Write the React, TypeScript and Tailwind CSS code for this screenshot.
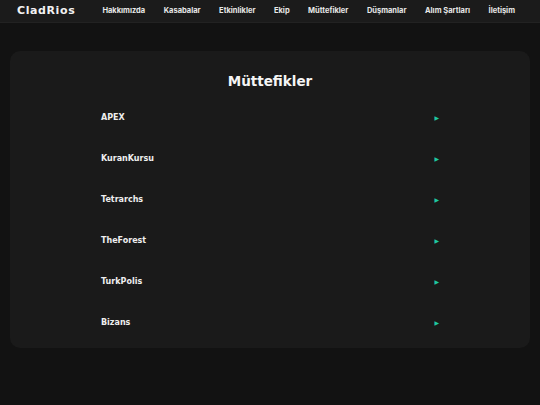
import React from "react"

const navLinks = ["Hakkımızda", "Kasabalar", "Etkinlikler", "Ekip", "Müttefikler", "Düşmanlar", "Alım Şartları", "İletişim"]

const allies = ["APEX", "KuranKursu", "Tetrarchs", "TheForest", "TurkPolis", "Bizans"]

export default function App() {
  return (
    <div
      className="min-h-[405px] bg-[#121212] text-white"
      style={{ fontFamily: "'DejaVu Sans', 'Open Sans', sans-serif" }}
    >
      {/* Header */}
      <header className="flex h-[23px] items-center justify-between border-b border-[#222] bg-[#1b1b1b] pl-[17px] pr-[25px]">
        <div className="text-[11px] font-bold tracking-[0.6px] text-[#f2f2f2]">CladRios</div>
        <nav className="flex items-center gap-[18.5px] whitespace-nowrap" style={{ fontFamily: "Inter, sans-serif" }}>
          {navLinks.map((link) => (
            <a key={link} className="text-[7.5px] font-bold text-[#e8e8e8]">
              {link}
            </a>
          ))}
        </nav>
      </header>

      {/* Allies */}
      <main className="px-[10px] pt-[28px]">
        <section className="rounded-[10px] bg-[#1a1a1a] pb-[5px] pt-[20px]">
          <h1 className="text-center text-[13.5px] font-bold leading-[20px] text-[#f5f5f5]">Müttefikler</h1>
          <ul className="mx-auto mt-[6px] w-[350px]">
            {allies.map((name) => (
              <li key={name} className="flex h-[41px] items-center justify-between px-[6px]">
                <span className="text-[8px] font-bold text-[#eeeeee]">{name}</span>
                <span className="text-[6px] text-[#1fc8a0]">▶</span>
              </li>
            ))}
          </ul>
        </section>
      </main>
    </div>
  )
}
